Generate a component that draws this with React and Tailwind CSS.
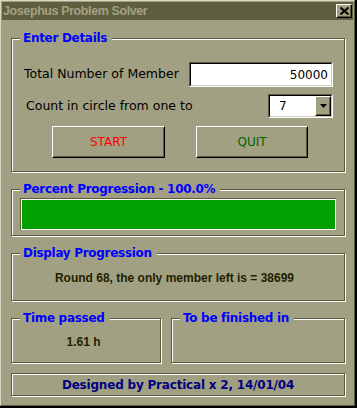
import React from 'react';

const BG = 'bg-[#a2a083]';

function Frame({ label, className = '', children }) {
  return (
    <div
      className={`relative border border-[#5b5a3c] shadow-[inset_1px_1px_0_#ffffff,1px_1px_0_#ffffff] ${className}`}
    >
      {label && (
        <div className="absolute left-[8px] -top-[9px] bg-[#a2a083] pl-[3px] pr-[5px] text-[12px] leading-[16px] font-bold tracking-[-0.3px] text-[#0000ff] whitespace-nowrap">
          {label}
        </div>
      )}
      {children}
    </div>
  );
}

function Sunken({ className = '', children }) {
  return (
    <div className={`border border-t-[#5b5a3c] border-l-[#5b5a3c] border-b-white border-r-white ${className}`}>
      <div className="h-full border border-t-black border-l-black border-b-[#cfcebb] border-r-[#cfcebb] bg-white flex items-center">
        {children}
      </div>
    </div>
  );
}

function Raised({ className = '', children }) {
  return (
    <div className={`border border-t-white border-l-white border-b-black border-r-black ${className}`}>
      <div className="h-full border border-t-transparent border-l-transparent border-b-[#5b5a3c] border-r-[#5b5a3c] flex items-center justify-center">
        {children}
      </div>
    </div>
  );
}

export default function App() {
  return (
    <div className={`w-[357px] h-[408px] ${BG} border-r-2 border-b-2 border-black font-['DejaVu_Sans',sans-serif] text-black`}>
      <div className="h-full flex flex-col border border-t-[#d8d7c4] border-l-[#d8d7c4] border-b-[#5b5a3c] border-r-[#5b5a3c] p-px">
        {/* title bar */}
        <div className="h-[18px] shrink-0 bg-[#5f5e3f] flex items-center justify-between pl-px pr-px">
          <span className="font-['Liberation_Sans',sans-serif] font-bold text-[12.5px] tracking-[-0.4px] text-[#a3a184]">
            Josephus Problem Solver
          </span>
          <Raised className={`w-[16px] h-[14px] ${BG}`}>
            <svg width="9" height="8" viewBox="0 0 9 8">
              <path d="M0.5 0.5 L8.5 7.5 M8.5 0.5 L0.5 7.5" stroke="#000" strokeWidth="2" />
            </svg>
          </Raised>
        </div>

        <div className="flex flex-col pl-[9px] pr-[8px]">
          {/* Enter Details */}
          <Frame label="Enter Details" className="mt-[18px] h-[134px]">
            <div className="mt-[23px] pl-[12px] pr-[11px] flex items-center justify-between">
              <span className="text-[12.5px]">Total Number of Member</span>
              <Sunken className="w-[144px] h-[25px]">
                <span className="w-full text-right pr-[3px] text-[12px]">50000</span>
              </Sunken>
            </div>
            <div className="mt-[7px] pl-[14px] pr-[11px] flex items-center justify-between">
              <span className="text-[12.5px]">Count in circle from one to</span>
              <Sunken className="w-[65px] h-[24px]">
                <span className="flex-1 pl-[9px] text-[12px]">7</span>
                <Raised className={`w-[16px] h-full ${BG}`}>
                  <svg width="7" height="4" viewBox="0 0 7 4">
                    <path d="M0 0 H7 L3.5 4 Z" fill="#000" />
                  </svg>
                </Raised>
              </Sunken>
            </div>
            <div className="mt-[8px] pl-[40px] flex gap-[31px]">
              <Raised className="w-[113px] h-[32px]">
                <span className="text-[12px] text-[#ff0000]">START</span>
              </Raised>
              <Raised className="w-[112px] h-[32px]">
                <span className="text-[12px] text-[#006400]">QUIT</span>
              </Raised>
            </div>
          </Frame>

          {/* Percent Progression */}
          <Frame label="Percent Progression - 100.0%" className="mt-[17px] h-[47px]">
            <div className="mt-[8px] mx-[8px] h-[32px] border-t border-l border-[#5b5a3c]">
              <div className="h-full border border-white bg-[#00a000]" />
            </div>
          </Frame>

          {/* Display Progression */}
          <Frame label="Display Progression" className="mt-[17px] h-[48px] flex items-center justify-center">
            <span className="pt-[2px] pr-[7px] font-['Liberation_Sans',sans-serif] text-[12px] font-bold text-[#1f1f00]">
              Round 68, the only member left is = 38699
            </span>
          </Frame>

          {/* Time rows */}
          <div className="mt-[17px] flex gap-[10px]">
            <Frame label="Time passed" className="w-[150px] h-[45px] flex items-center justify-center">
              <span className="pt-[2px] pr-[5px] font-['Liberation_Sans',sans-serif] text-[12px] font-bold text-[#1f1f00]">
                1.61 h
              </span>
            </Frame>
            <Frame label="To be finished in" className="w-[174px] h-[45px]" />
          </div>

          {/* Footer */}
          <Frame className="mt-[10px] h-[23px] flex items-center justify-center">
            <span className="text-[12px] font-bold tracking-[-0.2px] text-[#000080]">
              Designed by Practical x 2, 14/01/04
            </span>
          </Frame>
        </div>
      </div>
    </div>
  );
}
